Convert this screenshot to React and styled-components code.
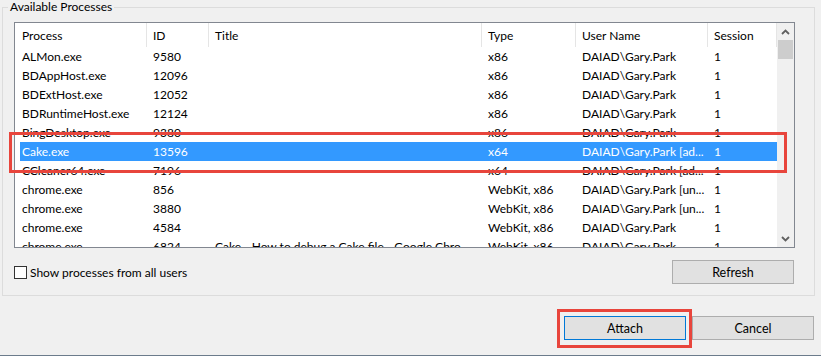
import React from 'react'
import styled, { createGlobalStyle } from 'styled-components'

const GlobalStyle = createGlobalStyle`
  html, body {
    margin: 0;
    padding: 0;
    background: #f0f0f0;
  }
  body {
    font-family: Lato, "Noto Sans", "Liberation Sans", sans-serif;
    font-size: 12px;
    color: #000;
  }
`

const columns = [
  { key: 'name', label: 'Process', width: 132 },
  { key: 'id', label: 'ID', width: 62 },
  { key: 'title', label: 'Title', width: 273 },
  { key: 'type', label: 'Type', width: 94 },
  { key: 'user', label: 'User Name', width: 132 },
  { key: 'session', label: 'Session', width: 69 },
]

// user names are shown the way the list view cuts them
const processes = [
  { name: 'ALMon.exe', id: '9580', title: '', type: 'x86', user: 'DAIAD\\Gary.Park', session: '1' },
  { name: 'BDAppHost.exe', id: '12096', title: '', type: 'x86', user: 'DAIAD\\Gary.Park', session: '1' },
  { name: 'BDExtHost.exe', id: '12052', title: '', type: 'x86', user: 'DAIAD\\Gary.Park', session: '1' },
  { name: 'BDRuntimeHost.exe', id: '12124', title: '', type: 'x86', user: 'DAIAD\\Gary.Park', session: '1' },
  { name: 'BingDesktop.exe', id: '9380', title: '', type: 'x86', user: 'DAIAD\\Gary.Park', session: '1' },
  { name: 'Cake.exe', id: '13596', title: '', type: 'x64', user: 'DAIAD\\Gary.Park [ad...', session: '1', selected: true },
  { name: 'CCleaner64.exe', id: '7196', title: '', type: 'x64', user: 'DAIAD\\Gary.Park [ad...', session: '1' },
  { name: 'chrome.exe', id: '856', title: '', type: 'WebKit, x86', user: 'DAIAD\\Gary.Park [un...', session: '1' },
  { name: 'chrome.exe', id: '3880', title: '', type: 'WebKit, x86', user: 'DAIAD\\Gary.Park [un...', session: '1' },
  { name: 'chrome.exe', id: '4584', title: '', type: 'WebKit, x86', user: 'DAIAD\\Gary.Park', session: '1' },
  { name: 'chrome.exe', id: '6824', title: 'Cake - How to debug a Cake file - Google Chro...', type: 'WebKit, x86', user: 'DAIAD\\Gary.Park', session: '1' },
]

const gridCols = columns.map((c) => `${c.width}px`).join(' ')

const Dialog = styled.div`
  width: 821px;
  height: 356px;
  box-sizing: border-box;
  border-bottom: 1px solid #6b7b8b;
  background: #f0f0f0;
  display: flex;
  flex-direction: column;
`

const GroupBox = styled.fieldset`
  margin: 0 6px 0 2px;
  padding: 8px 19px 11px 11px;
  border: 1px solid #dcdcdc;
  min-width: 0;
  display: flex;
  flex-direction: column;
`

const Legend = styled.legend`
  margin-left: -6px;
  padding: 0 2px;
  line-height: 14px;
`

const ListFrame = styled.div`
  position: relative;
`

const ListBox = styled.div`
  height: 226px;
  box-sizing: border-box;
  border: 1px solid #828790;
  background: #fff;
  display: flex;
  overflow: hidden;
`

const Table = styled.div`
  flex: 1;
  min-width: 0;
  overflow: hidden;
`

const HeaderRow = styled.div`
  display: grid;
  grid-template-columns: ${gridCols};
  height: 24px;
`

const HeaderCell = styled.div`
  padding-left: ${(p) => (p.$first ? 7 : 6)}px;
  border-right: 1px solid #e5e5e5;
  display: flex;
  align-items: center;
  white-space: nowrap;
  overflow: hidden;
`

const Row = styled.div`
  display: grid;
  grid-template-columns: ${gridCols};
  height: 19px;
  color: ${(p) => (p.$selected ? '#fff' : '#000')};
  background: ${(p) =>
    p.$selected ? 'linear-gradient(to right, transparent 5px, #3399ff 5px)' : 'transparent'};
`

const Cell = styled.div`
  padding: 0 2px 0 ${(p) => (p.$first ? 7 : 6)}px;
  line-height: 19px;
  white-space: nowrap;
  overflow: hidden;
  text-overflow: ellipsis;
`

const ScrollBar = styled.div`
  width: 17px;
  background: #f0f0f0;
  display: flex;
  flex-direction: column;
  align-items: center;
`

const ArrowBox = styled.div`
  height: 17px;
  width: 17px;
  display: flex;
  align-items: center;
  justify-content: center;
`

const Thumb = styled.div`
  width: 15px;
  height: 19px;
  background: #cdcdcd;
`

const Track = styled.div`
  flex: 1;
`

const Callout = styled.div`
  position: absolute;
  border: 3px solid #e8453c;
  pointer-events: none;
`

const RowCallout = styled(Callout)`
  left: -5px;
  top: 110px;
  width: 772px;
  height: 35px;
`

const FooterRow = styled.div`
  margin-top: 12px;
  display: flex;
  align-items: center;
  justify-content: space-between;
`

const CheckLabel = styled.label`
  display: flex;
  align-items: center;
  gap: 3px;
  margin-top: 1px;
`

const CheckBox = styled.span`
  width: 11px;
  height: 11px;
  border: 1px solid #333;
  background: #fff;
`

const Button = styled.button`
  width: 122px;
  height: 24px;
  box-sizing: border-box;
  margin-right: ${(p) => p.$inset || 0}px;
  font-family: inherit;
  font-size: 12.5px;
  color: #000;
  background: #e1e1e1;
  border: 1px solid ${(p) => (p.$focused ? '#0078d7' : '#adadad')};
  padding: 0;
  position: relative;
`

const ButtonCallout = styled(Callout)`
  left: -8px;
  top: -8px;
  width: 129px;
  height: 33px;
`

const Actions = styled.div`
  margin-top: 20px;
  margin-right: 7px;
  display: flex;
  justify-content: flex-end;
  gap: 6px;
`

const Chevron = ({ up }) => (
  <svg width="9" height="6" viewBox="0 0 9 6">
    <path
      d={up ? 'M1 5 L4.5 1.5 L8 5' : 'M1 1 L4.5 4.5 L8 1'}
      fill="none"
      stroke="#606060"
      strokeWidth="1.8"
    />
  </svg>
)

const App = () => {
  return (
    <>
      <GlobalStyle />
      <Dialog>
        <GroupBox>
          <Legend>Available Processes</Legend>
          <ListFrame>
            <ListBox>
              <Table>
                <HeaderRow>
                  {columns.map((c, i) => (
                    <HeaderCell key={c.key} $first={i === 0}>
                      {c.label}
                    </HeaderCell>
                  ))}
                </HeaderRow>
                {processes.map((p) => (
                  <Row key={p.id} $selected={p.selected}>
                    {columns.map((c, i) => (
                      <Cell key={c.key} $first={i === 0}>
                        {p[c.key]}
                      </Cell>
                    ))}
                  </Row>
                ))}
              </Table>
              <ScrollBar>
                <ArrowBox>
                  <Chevron up />
                </ArrowBox>
                <Thumb />
                <Track />
                <ArrowBox>
                  <Chevron />
                </ArrowBox>
              </ScrollBar>
            </ListBox>
            <RowCallout />
          </ListFrame>
          <FooterRow>
            <CheckLabel>
              <CheckBox />
              Show processes from all users
            </CheckLabel>
            <Button $inset={1}>Refresh</Button>
          </FooterRow>
        </GroupBox>
        <Actions>
          <Button $focused>
            Attach
            <ButtonCallout />
          </Button>
          <Button>Cancel</Button>
        </Actions>
      </Dialog>
    </>
  )
}

export default App
